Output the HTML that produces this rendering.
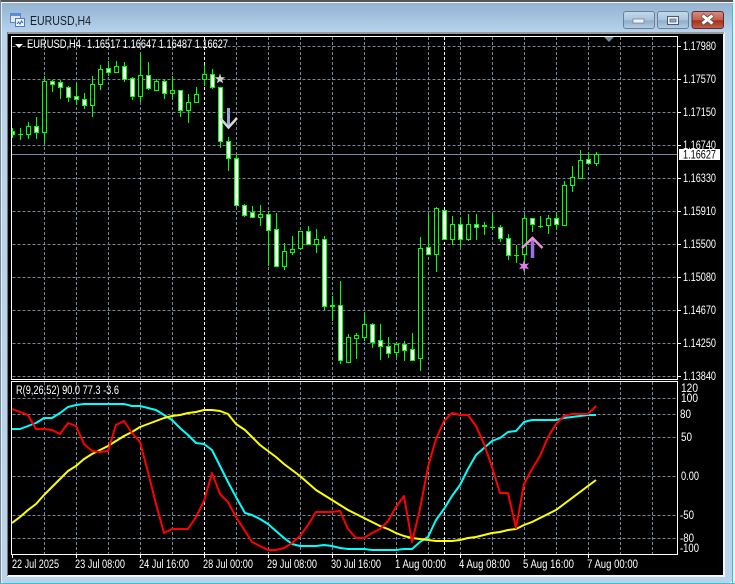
<!DOCTYPE html>
<html><head><meta charset="utf-8"><title>EURUSD,H4</title>
<style>
html,body{margin:0;padding:0;background:#b9d3ea;width:735px;height:584px;overflow:hidden}
svg{display:block;position:absolute;left:0;top:0}
text{font-family:"Liberation Sans",sans-serif;font-size:11.5px;fill:#fff}
</style></head>
<body>
<svg width="735" height="584" viewBox="0 0 735 584" xmlns="http://www.w3.org/2000/svg">
<defs>
<linearGradient id="t" x1="0" y1="0" x2="0" y2="1"><stop offset="0" stop-color="#93b3d1"/><stop offset="1" stop-color="#b8d3ec"/></linearGradient>
<linearGradient id="b" x1="0" y1="0" x2="0" y2="1"><stop offset="0" stop-color="#c6d9ea"/><stop offset=".5" stop-color="#a9c3dc"/><stop offset=".55" stop-color="#8fadca"/><stop offset="1" stop-color="#b5cee5"/></linearGradient>
<linearGradient id="c" x1="0" y1="0" x2="0" y2="1"><stop offset="0" stop-color="#d98d80"/><stop offset=".48" stop-color="#c5604c"/><stop offset=".55" stop-color="#a92f1a"/><stop offset="1" stop-color="#c0654c"/></linearGradient>
</defs>
<!-- window frame -->
<rect x="0" y="0" width="735" height="584" fill="#e8f2f8"/>
<rect x="0" y="0" width="733" height="583" rx="5" fill="#b9d3ea"/>
<rect x="0" y="3" width="733" height="30" fill="url(#t)"/>
<rect x="0" y="0" width="733" height="2" fill="#555"/>
<rect x="0" y="2" width="733" height="1" fill="#f4f7fa"/>
<rect x="0" y="0" width="1" height="583" fill="#7a8a98"/>
<rect x="1" y="3" width="1" height="580" fill="#e4eef6"/>
<rect x="732" y="5" width="1" height="578" fill="#30c4d8"/>
<rect x="0" y="583" width="735" height="1" fill="#28c8dc"/>
<rect x="7" y="32" width="718" height="545" fill="#f4f6f8"/>
<rect x="7" y="32" width="717" height="2" fill="#9a9a9a"/>
<rect x="7" y="32" width="1" height="544" fill="#777"/>
<rect x="8" y="34" width="715" height="541" fill="#000"/>
<!-- icon -->
<rect x="10.5" y="13.5" width="10" height="9" fill="#dfeaf6" stroke="#5a86c8"/>
<rect x="10.5" y="13.5" width="10" height="2.5" fill="#5a8fd8"/>
<rect x="15.5" y="18.5" width="9" height="8" fill="#eef4fb" stroke="#4c7cc4"/>
<path d="M17 24l1.5-2 1.5 2 1.5-3 1.5 2" fill="none" stroke="#3a66b0"/>
<text x="30" y="25" textLength="61" lengthAdjust="spacingAndGlyphs" style="font-size:13px;fill:#1a1f26">EURUSD,H4</text>
<!-- buttons -->
<rect x="623.5" y="11.5" width="31" height="17" rx="2.5" fill="url(#b)" stroke="#6a7f94"/>
<rect x="633" y="19" width="11" height="4" fill="#eef2f6" stroke="#5a6a7c" stroke-width=".6"/>
<rect x="657.5" y="11.5" width="31" height="17" rx="2.5" fill="url(#b)" stroke="#6a7f94"/>
<rect x="667.5" y="16.5" width="11" height="8" fill="#e8eef4" stroke="#4c5a6a"/>
<rect x="670" y="19" width="6" height="3" fill="#8ea8c2" stroke="#4c5a6a" stroke-width=".6"/>
<rect x="692" y="11.5" width="31.5" height="17" rx="2.5" fill="url(#c)" stroke="#5c2a30"/>
<path d="M702 15l11 9M713 15l-11 9" stroke="#555" stroke-width="4.4"/>
<path d="M702.5 15.5l10 8M712.5 15.5l-10 8" stroke="#fff" stroke-width="3"/>
<!-- grid -->
<g fill="none" stroke="#778899" stroke-dasharray="3 2" shape-rendering="crispEdges">
<path d="M12.5 46.5H677M12.5 79.5H677M12.5 112.5H677M12.5 145.5H677M12.5 178.5H677M12.5 211.5H677M12.5 244.5H677M12.5 277.5H677M12.5 310.5H677M12.5 343.5H677M12.5 376.5H677"/>
<path d="M12.5 398.5H677M12.5 414.5H677M12.5 437.5H677M12.5 476.5H677M12.5 515.5H677M12.5 538.5H677"/>
<path d="M44.5 37V554M76.5 37V554M108.5 37V554M140.5 37V554M172.5 37V554M236.5 37V554M268.5 37V554M300.5 37V554M332.5 37V554M364.5 37V554M396.5 37V554M428.5 37V554M460.5 37V554M492.5 37V554M524.5 37V554M556.5 37V554M588.5 37V554M620.5 37V554M652.5 37V554"/>
</g>
<path d="M204.5 37V554M444.5 37V554" fill="none" stroke="#fff" stroke-dasharray="3 2" shape-rendering="crispEdges"/>
<path d="M12 154.5H678" stroke="#778899" shape-rendering="crispEdges"/>
<!-- candles -->
<g shape-rendering="crispEdges">
<path stroke="#0f0" fill="none" d="M12.5 128V138M20.5 128V140M28.5 122V139M36.5 117V139M44.5 76V143M52.5 80V92M60.5 80V99M68.5 86V102M76.5 83V105M84.5 93V109M92.5 76V117M100.5 65V90M108.5 61V76M116.5 61V72M124.5 62V82M132.5 77V100M140.5 54V102M148.5 62V90M156.5 79V91M164.5 79V99M172.5 76V99M180.5 90V117M188.5 94V123M196.5 87V102M204.5 65V86M212.5 69V89M220.5 87V148M228.5 137V171M236.5 155V207M244.5 204V217M252.5 206V218M260.5 205V226M268.5 211V266M276.5 213V266M284.5 243V270M292.5 236V255M300.5 231V248M308.5 226V245M316.5 229V253M324.5 236V310M332.5 296V321M340.5 281V364M348.5 334V363M356.5 333V359M364.5 313V341M372.5 323V348M380.5 324V360M388.5 337V358M396.5 342V357M404.5 341V361M412.5 333V360M420.5 237V371M428.5 214V255M436.5 207V272M444.5 210V239M452.5 216V245M460.5 217V247M468.5 214V241M476.5 214V240M484.5 222V235M492.5 214V230M500.5 225V242M508.5 234V260M516.5 245V263M524.5 215V272M532.5 218V232M540.5 216V228M548.5 215V234M556.5 212V230M564.5 181V225M572.5 166V192M580.5 150V178M588.5 152V165M596.5 152V166"/>
<path stroke="#0f0" fill="#fff" d="M12.5 131.5h2v3h-2zM34.5 126.5h4v6h-4zM50.5 81.5h4v3h-4zM58.5 82.5h4v5h-4zM66.5 87.5h4v10h-4zM74.5 96.5h4v3h-4zM82.5 99.5h4v6h-4zM106.5 68.5h4v4h-4zM122.5 66.5h4v13h-4zM130.5 78.5h4v18h-4zM146.5 75.5h4v13h-4zM162.5 81.5h4v12h-4zM178.5 90.5h4v20h-4zM210.5 74.5h4v13h-4zM218.5 87.5h4v54h-4zM226.5 141.5h4v17h-4zM234.5 158.5h4v47h-4zM242.5 205.5h4v10h-4zM250.5 212.5h4v5h-4zM266.5 214.5h4v16h-4zM274.5 229.5h4v37h-4zM306.5 231.5h4v13h-4zM322.5 239.5h4v67h-4zM338.5 305.5h4v55h-4zM370.5 324.5h4v18h-4zM378.5 340.5h4v6h-4zM386.5 346.5h4v7h-4zM402.5 344.5h4v6h-4zM410.5 349.5h4v11h-4zM426.5 247.5h4v7h-4zM442.5 210.5h4v29h-4zM458.5 224.5h4v15h-4zM474.5 224.5h4v3h-4zM498.5 227.5h4v11h-4zM506.5 238.5h4v17h-4zM530.5 218.5h4v6h-4zM554.5 218.5h4v6h-4zM586.5 159.5h4v4h-4z"/>
<path stroke="#0f0" fill="#000" d="M26.5 126.5h4v8h-4zM42.5 81.5h4v51h-4zM90.5 84.5h4v21h-4zM98.5 69.5h4v15h-4zM114.5 66.5h4v6h-4zM138.5 75.5h4v21h-4zM154.5 81.5h4v9h-4zM170.5 90.5h4v3h-4zM186.5 102.5h4v8h-4zM194.5 94.5h4v8h-4zM202.5 74.5h4v5h-4zM258.5 214.5h4v3h-4zM282.5 251.5h4v15h-4zM290.5 249.5h4v3h-4zM298.5 231.5h4v17h-4zM314.5 239.5h4v5h-4zM346.5 337.5h4v25h-4zM354.5 335.5h4v3h-4zM362.5 324.5h4v13h-4zM394.5 344.5h4v8h-4zM418.5 248.5h4v110h-4zM434.5 208.5h4v46h-4zM450.5 224.5h4v15h-4zM466.5 224.5h4v15h-4zM522.5 218.5h4v36h-4zM546.5 218.5h4v7h-4zM562.5 185.5h4v40h-4zM570.5 177.5h4v8h-4zM578.5 160.5h4v18h-4zM594.5 154.5h4v9h-4z"/>
<path stroke="#0f0" fill="none" d="M18 134.5h5M330 305.5h5M330 306.5h5M482 225.5h5M482 226.5h5M490 227.5h5M514 255.5h5M538 226.5h5"/>
</g>
<!-- arrows and stars -->
<polygon transform="translate(220,79)" points="0,-5.5 1.3,-1.8 5.2,-1.7 2.1,.7 3.2,4.4 0,2.3 -3.2,4.4 -2.1,.7 -5.2,-1.7 -1.3,-1.8" fill="#d6d2cc"/>
<path d="M228.5 108V127" stroke="#8fa6d8" stroke-width="3" fill="none"/>
<path d="M220 118l8.5 9.5 8.5-9.5" stroke="#d8d8d8" stroke-width="2.5" fill="none"/>
<polygon transform="translate(524,266)" points="0,-6 1.3,-2 5.2,-2.6 2.6,0 5,3.2 1.2,2.2 0,6 -1.2,2.2 -5,3.2 -2.6,0 -5.2,-2.6 -1.3,-2" fill="#e07fe8"/>
<path d="M532.5 239V258" stroke="#a070e0" stroke-width="3.5" fill="none"/>
<path d="M522 248l10.5-10 10 10" stroke="#ee90dc" stroke-width="2.5" fill="none"/>
<!-- indicator -->
<g fill="none" stroke-width="2" stroke-linejoin="round">
<polyline stroke="#00ffff" points="12,429 20,429 28,426 36,423 44,418 52,418 60,413 68,407 76,405 84,404 92,404 100,404 108,404 116,404 124,404 132,406 140,406 148,408 156,410 164,415 172,420 180,428 188,435 196,443 204,444 212,450 220,466 228,482 236,497 245,513 252,515 260,519 268,524 276,531 284,538 292,544 300,546 308,546 316,546 324,545 332,546 340,548 348,549 356,549 364,549 372,550 380,550 388,550 396,550 404,549 412,549 420,542 428,537 436,520 444,509 452,496 460,485 468,469 476,455 484,448 492,441 500,438 508,432 516,431 524,422 532,420 540,420 548,420 556,420 564,418 572,417 580,416 588,415 596,415"/>
<polyline stroke="#ffff00" points="12,523 20,517 28,510 36,504 44,495 52,487 60,479 68,471 76,466 84,459 92,454 100,450 108,446 116,441 124,436 132,432 140,427 148,424 156,421 164,418 172,416 180,415 188,413 196,412 204,410 212,410 220,411 228,414 236,424 245,430 252,437 260,445 268,451 276,457 284,464 292,470 300,476 308,483 316,490 324,495 332,500 340,505 348,510 356,514 364,518 372,522 380,526 388,529 396,533 404,536 412,538 420,539 428,540 436,541 444,541 452,541 460,540 468,538 476,537 484,535 492,533 500,532 508,530 516,529 524,525 532,522 540,518 548,514 556,510 564,504 572,498 580,492 588,486 596,480"/>
<polyline stroke="#ff0000" points="12,409 20,412 28,415 36,429 44,429 52,430 60,434 68,423 76,426 84,444 92,451 100,452 108,451 116,425 124,421 132,433 140,442 148,472 156,504 164,533 172,529 180,529 188,529 196,517 204,501 212,473 220,494 228,502 236,517 245,531 252,542 260,546 268,550 276,550 284,548 292,543 300,536 308,525 316,512 324,512 332,512 340,511 348,529 356,538 364,538 372,533 380,529 388,521 396,507 404,496 412,542 420,509 428,467 436,439 444,421 452,413 460,415 468,415 476,426 484,444 492,467 500,493 508,493 516,528 524,484 532,469 540,456 548,437 556,424 564,416 572,414 580,414 588,414 596,406"/>
</g>
<!-- frames -->
<g fill="none" stroke="#fff" shape-rendering="crispEdges">
<rect x="11.5" y="36.5" width="666" height="343"/>
<rect x="11.5" y="381.5" width="666" height="173"/>
<path d="M678 46.5h3M678 79.5h3M678 112.5h3M678 145.5h3M678 178.5h3M678 211.5h3M678 244.5h3M678 277.5h3M678 310.5h3M678 343.5h3M678 376.5h3"/>
<path d="M12.5 555v3M76.5 555v3M140.5 555v3M204.5 555v3M268.5 555v3M332.5 555v3M396.5 555v3M460.5 555v3M524.5 555v3M588.5 555v3"/>
</g>
<polygon points="604,37 614,37 609,42" fill="#778899"/>
<polygon points="15,44 23,44 19,48" fill="#fff"/>
<!-- header text -->
<text x="27" y="48" textLength="54" lengthAdjust="spacingAndGlyphs">EURUSD,H4</text>
<text x="87" y="48" textLength="141" lengthAdjust="spacingAndGlyphs">1.16517 1.16647 1.16487 1.16627</text>
<text x="16" y="394" textLength="103" lengthAdjust="spacingAndGlyphs">R(9,26,52) 90.0 77.3 -3.6</text>
<!-- price labels -->
<g>
<text x="683" y="50" textLength="33" lengthAdjust="spacingAndGlyphs">1.17980</text>
<text x="683" y="83" textLength="33" lengthAdjust="spacingAndGlyphs">1.17570</text>
<text x="683" y="116" textLength="33" lengthAdjust="spacingAndGlyphs">1.17150</text>
<text x="683" y="149" textLength="33" lengthAdjust="spacingAndGlyphs">1.16740</text>
<text x="683" y="182" textLength="33" lengthAdjust="spacingAndGlyphs">1.16330</text>
<text x="683" y="215" textLength="33" lengthAdjust="spacingAndGlyphs">1.15910</text>
<text x="683" y="248" textLength="33" lengthAdjust="spacingAndGlyphs">1.15500</text>
<text x="683" y="281" textLength="33" lengthAdjust="spacingAndGlyphs">1.15080</text>
<text x="683" y="314" textLength="33" lengthAdjust="spacingAndGlyphs">1.14670</text>
<text x="683" y="347" textLength="33" lengthAdjust="spacingAndGlyphs">1.14250</text>
<text x="683" y="380" textLength="33" lengthAdjust="spacingAndGlyphs">1.13840</text>
</g>
<rect x="679" y="149" width="41" height="11" fill="#fff"/>
<text x="683" y="158.5" textLength="33" lengthAdjust="spacingAndGlyphs" style="fill:#000">1.16627</text>
<g>
<text x="681" y="392" textLength="17" lengthAdjust="spacingAndGlyphs">120</text>
<text x="681" y="402" textLength="17" lengthAdjust="spacingAndGlyphs">100</text>
<text x="680" y="418" textLength="11" lengthAdjust="spacingAndGlyphs">80</text>
<text x="681" y="441" textLength="11" lengthAdjust="spacingAndGlyphs">50</text>
<text x="681" y="480" textLength="18" lengthAdjust="spacingAndGlyphs">0.00</text>
<text x="680" y="519" textLength="14" lengthAdjust="spacingAndGlyphs">-50</text>
<text x="680" y="542" textLength="14" lengthAdjust="spacingAndGlyphs">-80</text>
<text x="680" y="552" textLength="19" lengthAdjust="spacingAndGlyphs">-100</text>
</g>
<!-- time labels -->
<g>
<text x="12" y="568" textLength="47" lengthAdjust="spacingAndGlyphs">22 Jul 2025</text>
<text x="75" y="568" textLength="50" lengthAdjust="spacingAndGlyphs">23 Jul 08:00</text>
<text x="139" y="568" textLength="50" lengthAdjust="spacingAndGlyphs">24 Jul 16:00</text>
<text x="203" y="568" textLength="50" lengthAdjust="spacingAndGlyphs">28 Jul 00:00</text>
<text x="267" y="568" textLength="50" lengthAdjust="spacingAndGlyphs">29 Jul 08:00</text>
<text x="331" y="568" textLength="50" lengthAdjust="spacingAndGlyphs">30 Jul 16:00</text>
<text x="395" y="568" textLength="51" lengthAdjust="spacingAndGlyphs">1 Aug 00:00</text>
<text x="459" y="568" textLength="51" lengthAdjust="spacingAndGlyphs">4 Aug 08:00</text>
<text x="523" y="568" textLength="51" lengthAdjust="spacingAndGlyphs">5 Aug 16:00</text>
<text x="587" y="568" textLength="51" lengthAdjust="spacingAndGlyphs">7 Aug 00:00</text>
</g>
</svg>
</body></html>
